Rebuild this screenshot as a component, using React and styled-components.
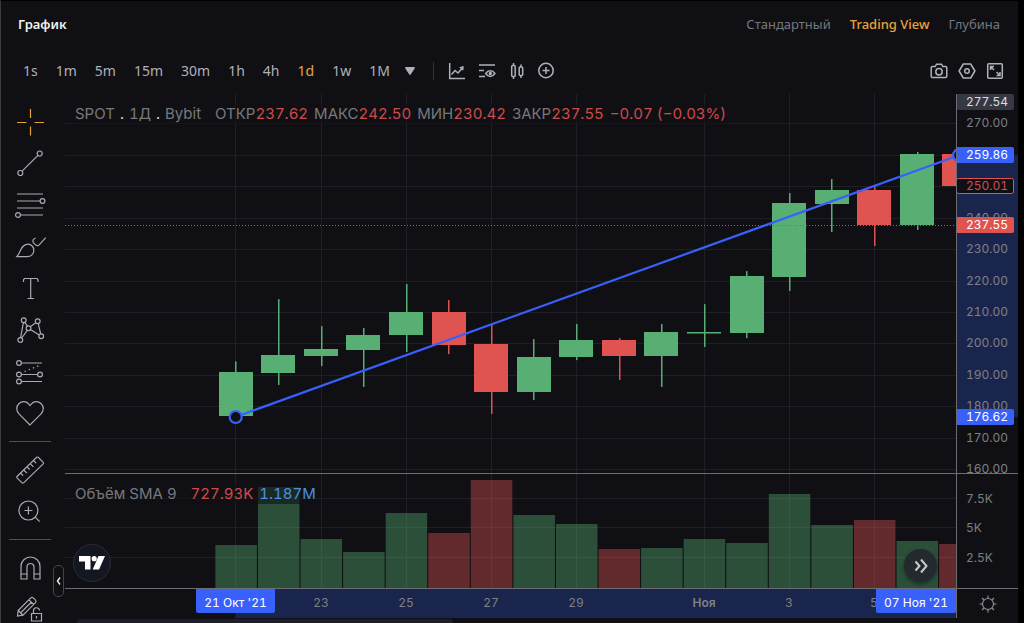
import React, { useState } from 'react'
import styled, { createGlobalStyle, css } from 'styled-components'

const UP = '#57af73'
const DOWN = '#df5350'
const BLUE = '#3861fb'
const NAVY = '#1a254d'
const PANEL = '#101014'
const GRID = '#1f2025'
const BORDER = '#6c6d72'
const ORANGE = '#e8a338'

const PRICE_HEIGHT = 379
const VOLUME_HEIGHT = 114
const TIME_HEIGHT = 29
const STEP = 42.57

// open, close, high, low, volume (K)
const candles = [
  [176.8, 190.9, 194.3, 176.8, 3.56],
  [190.6, 196.3, 214.1, 186.8, 8.47],
  [196.1, 198.1, 205.5, 192.8, 4.11],
  [197.9, 202.8, 204.9, 186.2, 2.97],
  [202.7, 210.0, 218.9, 197.3, 6.31],
  [210.0, 199.5, 213.8, 196.6, 4.58],
  [199.8, 184.6, 205.9, 177.6, 9.07],
  [184.6, 195.7, 201.4, 182.0, 6.14],
  [195.7, 201.1, 206.2, 194.7, 5.38],
  [201.1, 196.0, 201.7, 188.4, 3.22],
  [196.0, 203.6, 206.2, 186.2, 3.31],
  [203.4, 203.7, 212.5, 198.9, 4.11],
  [203.3, 221.4, 223.0, 201.7, 3.77],
  [221.1, 244.7, 247.8, 216.7, 7.84],
  [244.3, 248.8, 252.3, 235.4, 5.25],
  [248.8, 237.55, 250.4, 231.0, 5.72],
  [237.55, 260.2, 260.9, 236.1, 3.94],
  [260.2, 250.01, 260.2, 250.01, 3.64],
]

const priceTicks = [270, 260, 250, 240, 230, 220, 210, 200, 190, 180, 170, 160]
const volumeTicks = [7.5, 5, 2.5]
const timeTicks = [
  { index: 0 },
  { index: 2, label: '23' },
  { index: 4, label: '25' },
  { index: 6, label: '27' },
  { index: 8, label: '29' },
  { index: 11, label: 'Ноя', bold: true },
  { index: 13, label: '3' },
  { index: 15, label: '5' },
]

// x is counted from the right edge of the pane, so the last candle stays there
const xOf = (index) => index * STEP - 720.6
const priceY = (price) => 29.3 + (270 - price) * 3.145
const volumeY = (volume) => VOLUME_HEIGHT - 1 - volume * 11.8

const GlobalStyle = createGlobalStyle`
  * {
    box-sizing: border-box;
  }
  body {
    margin: 0;
    background: #000;
  }
`

const Panel = styled.main`
  display: flex;
  flex-direction: column;
  height: 100vh;
  margin-right: 6px;
  overflow: hidden;
  background: ${PANEL};
  border-top: 1px solid #000;
  border-left: 1px solid #3a3b3f;
  font-family: 'Noto Sans', sans-serif;
  font-size: 14px;
  color: #adb1b8;
`

const Header = styled.header`
  display: flex;
  align-items: center;
  justify-content: space-between;
  flex: none;
  height: 46px;
  padding: 0 18px 0 17px;
`

const Title = styled.h1`
  margin: 0;
  font-size: 13px;
  font-weight: 600;
  color: #f0f1f2;
`

const Tabs = styled.nav`
  display: flex;
  gap: 19px;
`

const PlainButton = styled.button`
  display: flex;
  align-items: center;
  justify-content: center;
  padding: 0;
  border: 0;
  background: none;
  font: inherit;
  color: inherit;
  cursor: pointer;
`

const Tab = styled(PlainButton)`
  font-size: 13px;
  color: ${(props) => (props.$active ? ORANGE : '#74777d')};
  font-weight: ${(props) => (props.$active ? 500 : 400)};
`

const Toolbar = styled.div`
  display: flex;
  align-items: center;
  justify-content: space-between;
  flex: none;
  height: 47px;
  padding: 0 14px 0 22px;
`

const ToolbarGroup = styled.div`
  display: flex;
  align-items: center;
  gap: ${(props) => props.$gap || 0}px;
`

const Interval = styled(PlainButton)`
  color: ${(props) => (props.$active ? ORANGE : 'inherit')};
`

const CaretButton = styled(PlainButton)`
  margin-left: 15px;
`

const Separator = styled.div`
  width: 1px;
  height: 18px;
  margin: 0 14px 0 18px;
  background: #303136;
`

const Body = styled.div`
  display: flex;
  flex: 1;
  min-height: 0;
`

const Sidebar = styled.aside`
  position: relative;
  flex: none;
  width: 64px;
  padding: 7px 14px 0 8px;
`

const ToolGroup = styled.div`
  display: flex;
  flex-direction: column;
  height: ${(props) => props.$height}px;
`

const Tool = styled(PlainButton)`
  flex: 1;
  color: ${(props) => (props.$active ? ORANGE : '#a9abb0')};
`

const ToolDivider = styled.hr`
  height: 1px;
  margin: 7px 0;
  border: 0;
  background: #4c4d55;
`

const Collapse = styled(PlainButton)`
  position: absolute;
  top: 471px;
  right: 1px;
  width: 11px;
  height: 32px;
  border: 1px solid #45464d;
  border-radius: 5px;
  background: ${PANEL};
  color: #e4e5e8;
`

const Chart = styled.section`
  display: grid;
  grid-template-columns: minmax(0, 1fr) 62px;
  grid-template-rows: ${PRICE_HEIGHT + 1}px ${VOLUME_HEIGHT + 1}px ${TIME_HEIGHT}px 1fr;
  flex: 1;
  min-width: 0;
  font-family: Inter, sans-serif;
  font-variant-numeric: tabular-nums;
`

const Pane = styled.div`
  position: relative;
  border-bottom: 1px solid ${BORDER};
`

const Scale = styled.div`
  border-left: 1px solid ${BORDER};
  ${(props) =>
    !props.$last &&
    css`
      border-bottom: 1px solid ${BORDER};
    `}
`

const Canvas = styled.svg`
  display: block;
  width: 100%;
  overflow: ${(props) => (props.$bleed ? 'visible' : 'hidden')};
`

const AxisText = styled.text`
  font-size: 12px;
  font-weight: ${(props) => (props.$bold ? 600 : 400)};
  fill: ${(props) => props.$color || '#7f8084'};
`

const Legend = styled.div`
  position: absolute;
  top: 10px;
  left: 8px;
  display: flex;
  gap: 14px;
  padding: 0 2px;
  background: rgba(16, 16, 20, 0.6);
  font-size: 15px;
  line-height: 20px;
  color: #77787c;
  white-space: nowrap;
`

const Quote = styled.span`
  display: flex;
  gap: ${(props) => props.$gap || 0}px;
`

const Value = styled.span`
  color: ${(props) => props.$color || '#cf4a4a'};
`

const Dot = styled.span`
  color: #d0d1d4;
`

const LogoLink = styled.a`
  position: absolute;
  left: 8px;
  bottom: 6px;
  display: flex;
  align-items: center;
  justify-content: center;
  width: 38px;
  height: 38px;
  border: 1px solid #2a2c36;
  border-radius: 50%;
  background: #131722;
  color: #fff;
`

const ScrollEnd = styled(PlainButton)`
  position: absolute;
  right: 19px;
  bottom: 6px;
  width: 33px;
  height: 33px;
  border-radius: 50%;
  background: #24292d;
  box-shadow: 0 2px 4px rgba(0, 0, 0, 0.4);
  color: #c8cacd;
`

const Corner = styled(Scale)`
  display: flex;
  align-items: center;
  justify-content: center;
  color: #8b8c91;
`

const ScrollTrack = styled.div`
  grid-column: 1 / -1;
  padding: 1px 0 0 12px;
`

const ScrollThumb = styled.div`
  width: 40%;
  height: 8px;
  border-radius: 8px;
  background: #1d1e27;
`

const IconSvg = styled.svg`
  overflow: visible;
`

const Icon = ({ size = 28, stroke = 1.2, children }) => (
  <IconSvg
    width={size}
    height={size}
    viewBox={`0 0 ${size} ${size}`}
    fill="none"
    stroke="currentColor"
    strokeWidth={stroke}
    aria-hidden="true"
  >
    {children}
  </IconSvg>
)

const tools = [
  {
    name: 'Перекрестие',
    icon: <path d="M14.5 1v9M14.5 18.5v9M1 14.5h9.5M18.5 14.5H28" />,
  },
  {
    name: 'Линия тренда',
    icon: (
      <>
        <circle cx="23.7" cy="4.5" r="2.5" />
        <circle cx="4.3" cy="24" r="2.5" />
        <path d="M6.1 22.2 21.9 6.3" />
      </>
    ),
  },
  {
    name: 'Уровни Фибоначчи',
    icon: (
      <>
        <path d="M1 3h26M1 10h23.5M1 17h26M4.5 24H27" />
        <circle cx="26.5" cy="10" r="2.4" />
        <circle cx="2" cy="24" r="2.4" />
      </>
    ),
  },
  {
    name: 'Кисть',
    icon: (
      <>
        <path d="M.8 23.6C4.5 20 5 11.2 11.8 11.2c3.600 0 6 2.700 6 6 0 3.800-2.800 6.400-6.500 6.400z" />
        <path d="M19.6 5c-2.600.8-3.400 2.800-2.200 4.600l2.200 2.200c1.200 1.200 2.400 1.200 3.600.1l6.500-7.300" />
      </>
    ),
  },
  {
    name: 'Текст',
    icon: <path d="M7.500 8V5.800L8.500 4.500h12.500l1 1.300V8M14.700 4.500v20M11.500 24.500h6.500" />,
  },
  {
    name: 'Паттерн',
    icon: (
      <>
        <circle cx="7.7" cy="4.2" r="2.4" />
        <circle cx="21.7" cy="5.3" r="2.4" />
        <circle cx="12.5" cy="12.2" r="2.4" />
        <circle cx="25.2" cy="20.3" r="2.4" />
        <circle cx="4.3" cy="24" r="2.4" />
        <path d="M7.4 6.6 4.6 21.6M8.7 6.4l2.8 3.7M14.3 10.7 19.8 6.8M22.2 7.7l2.5 10.2M14.5 13.5l8.7 5.5M11.3 14.3 5.7 22" />
      </>
    ),
  },
  {
    name: 'Прогноз',
    icon: (
      <>
        <circle cx="3" cy="5" r="2.4" />
        <circle cx="3" cy="16.5" r="2.4" />
        <circle cx="24" cy="16.5" r="2.4" />
        <circle cx="3" cy="23.5" r="2.4" />
        <path d="M5.4 5H26M5.4 16.5h16.2M5.4 23.5H26" />
        <path d="M8.5 13.5 25 6.8" strokeDasharray="1.5 3" />
      </>
    ),
  },
  {
    name: 'Избранное',
    icon: (
      <path d="M14 26 3.2 15.2c-3.200-3.300-3.200-7.800-.4-10.500C5.800 1.800 10.500 2 13 5.400l1 1.200 1-1.200c2.500-3.400 7.200-3.600 10.200-.7 2.800 2.700 2.800 7.200-.4 10.500z" />
    ),
  },
]

const viewTools = [
  {
    name: 'Линейка',
    icon: (
      <>
        <path d="M1 20.500 20.700 1.300c.5-.4 1-.4 1.500 0l5 5c.5.5.5 1 0 1.500L7.600 26.900c-.5.4-1 .4-1.500 0l-5.100-5c-.4-.5-.4-1 0-1.400z" />
        <path d="m4.500 17 2.700 2.700M7.700 14l3.200 3.200M11 10.800l2.700 2.700M14.200 7.700l3.200 3.200M17.500 4.500l2.700 2.700" />
      </>
    ),
  },
  {
    name: 'Увеличить',
    icon: (
      <>
        <circle cx="12.4" cy="13.5" r="9.5" />
        <path d="m19.200 20.200 4.500 4.500M12.400 9.500v8M8.400 13.500h8" />
      </>
    ),
  },
]

const modeTools = [
  {
    name: 'Магнит',
    icon: (
      <path d="M5 25V12.500a9.500 9.500 0 0 1 19 0V25h-6V13a3.500 3.500 0 0 0-7 0v12zM5 20h6M18 20h6" />
    ),
  },
  {
    name: 'Режим рисования',
    icon: (
      <>
        <path d="M2.200 15.500 14.800 2.900c.8-.8 1.700-.8 2.500 0l2.200 2.200c.8.8.8 1.700 0 2.500L7 20.200l-5.500.8zM13 4.800l4.700 4.700M4.500 18 15.500 7M2.200 15.500 7 20.200" />
        <path d="M15.500 18.500h10V26h-10zM17.500 18.500V16a3 3 0 0 1 6-.5M20.500 21v2.500" />
      </>
    ),
  },
]

const intervals = ['1s', '1m', '5m', '15m', '30m', '1h', '4h', '1d', '1w', '1M']
const tabs = ['Стандартный', 'Trading View', 'Глубина']

const GridColumns = ({ height }) =>
  timeTicks.map((tick) => (
    <rect
      key={tick.index}
      x={Math.round(xOf(tick.index))}
      width="1"
      height={height}
      fill={GRID}
    />
  ))

const PricePane = () => (
  <Canvas height={PRICE_HEIGHT} role="img" aria-label="График цены">
    {priceTicks.map((price) => (
      <rect
        key={price}
        y={Math.round(priceY(price))}
        width="100%"
        height="1"
        fill={GRID}
      />
    ))}
    <svg x="100%" overflow="visible">
      <GridColumns height={PRICE_HEIGHT} />
      {candles.map(([open, close, high, low], i) => {
        const color = close >= open ? UP : DOWN
        const top = Math.round(priceY(Math.max(open, close)))
        const bottom = Math.round(priceY(Math.min(open, close)))
        return (
          <g key={i} fill={color}>
            <rect
              x={Math.round(xOf(i))}
              y={priceY(high)}
              width="1.5"
              height={priceY(low) - priceY(high)}
            />
            <rect
              x={Math.round(xOf(i) - 16.7)}
              y={top}
              width="34"
              height={Math.max(bottom - top, 1.5)}
            />
          </g>
        )
      })}
    </svg>
    <line
      x1="0"
      x2="100%"
      y1="131.5"
      y2="131.5"
      stroke="#d04c4b"
      strokeDasharray="1 2"
      shapeRendering="crispEdges"
    />
    <svg x="100%" overflow="visible">
      <g stroke={BLUE} strokeWidth="2.2" fill={PANEL}>
        <line
          x1={xOf(0)}
          y1={priceY(176.62)}
          x2={xOf(17)}
          y2={priceY(259.86)}
        />
        <circle cx={xOf(0) + 0.3} cy={priceY(176.62)} r="6" />
        <circle cx={xOf(17)} cy={priceY(259.86)} r="6" />
      </g>
    </svg>
  </Canvas>
)

const VolumePane = () => (
  <Canvas height={VOLUME_HEIGHT} role="img" aria-label="Объём">
    {volumeTicks.map((tick) => (
      <rect
        key={tick}
        y={Math.round(volumeY(tick)) - 1}
        width="100%"
        height="1"
        fill={GRID}
      />
    ))}
    <svg x="100%" overflow="visible">
      <GridColumns height={VOLUME_HEIGHT} />
      {candles.map(([open, close, , , volume], i) => {
        const top = Math.round(volumeY(volume))
        return (
          <rect
            key={i}
            x={xOf(i) - 20}
            y={top}
            width="41.5"
            height={VOLUME_HEIGHT - top}
            fill={close >= open ? UP : DOWN}
            fillOpacity="0.4"
          />
        )
      })}
    </svg>
  </Canvas>
)

const PriceTag = ({ price, y, fill, stroke, color = '#fff' }) => (
  <g>
    <rect
      x={stroke ? -0.5 : -1}
      y={Math.round(y) - (stroke ? 7.5 : 8)}
      width={stroke ? 57 : 58}
      height={stroke ? 15 : 16}
      rx="2"
      fill={fill}
      stroke={stroke}
    />
    <AxisText x="9" y={Math.round(y) + 4} $color={color}>
      {price.toFixed(2)}
    </AxisText>
  </g>
)

const PriceScale = () => (
  <Canvas height={PRICE_HEIGHT}>
    <rect
      y={priceY(259.86)}
      width="100%"
      height={priceY(176.62) - priceY(259.86)}
      fill={NAVY}
    />
    {priceTicks
      .filter((price) => price !== 260 && price !== 250)
      .map((price) => (
        <AxisText key={price} x="9" y={Math.round(priceY(price)) + 4}>
          {price.toFixed(2)}
        </AxisText>
      ))}
    <PriceTag price={277.54} y={8} fill="#363944" color="#dcdde0" />
    <PriceTag
      price={250.01}
      y={priceY(250.01)}
      fill={PANEL}
      stroke={DOWN}
      color="#d04c4b"
    />
    <PriceTag price={237.55} y={priceY(237.55)} fill={DOWN} />
    <PriceTag price={259.86} y={priceY(259.86)} fill={BLUE} />
    <PriceTag price={176.62} y={priceY(176.62)} fill={BLUE} />
  </Canvas>
)

const TimeTag = ({ x, width, children }) => (
  <g>
    <rect x={x} y="-1" width={width} height="25" rx="2" fill={BLUE} />
    <AxisText x={x + width / 2} y="18" textAnchor="middle" $color="#fff">
      {children}
    </AxisText>
  </g>
)

const TimeScale = () => (
  <Canvas height={TIME_HEIGHT} $bleed>
    <svg x="100%" overflow="visible">
      <rect x={xOf(0)} width={-xOf(0)} height={TIME_HEIGHT} fill={NAVY} />
      {timeTicks.map((tick) => (
        <AxisText
          key={tick.index}
          x={Math.round(xOf(tick.index))}
          y="18"
          textAnchor="middle"
          $bold={tick.bold}
        >
          {tick.label}
        </AxisText>
      ))}
      <TimeTag x={-760} width={79}>
        21 Окт '21
      </TimeTag>
      <TimeTag x={-80} width={80}>
        07 Ноя '21
      </TimeTag>
    </svg>
  </Canvas>
)

const ToolButtons = ({ items, height, active, onSelect }) => (
  <ToolGroup $height={height}>
    {items.map((tool) => (
      <Tool
        key={tool.name}
        type="button"
        aria-label={tool.name}
        $active={active === tool.name}
        onClick={() => onSelect(tool.name)}
      >
        <Icon>{tool.icon}</Icon>
      </Tool>
    ))}
  </ToolGroup>
)

const App = () => {
  const [tab, setTab] = useState('Trading View')
  const [interval, setInterval] = useState('1d')
  const [tool, setTool] = useState('Перекрестие')

  return (
    <>
      <GlobalStyle />
      <Panel>
        <Header>
          <Title>График</Title>
          <Tabs>
            {tabs.map((name) => (
              <Tab
                key={name}
                type="button"
                $active={tab === name}
                onClick={() => setTab(name)}
              >
                {name}
              </Tab>
            ))}
          </Tabs>
        </Header>

        <Toolbar>
          <ToolbarGroup>
            <ToolbarGroup $gap={18}>
              {intervals.map((name) => (
                <Interval
                  key={name}
                  type="button"
                  $active={interval === name}
                  onClick={() => setInterval(name)}
                >
                  {name}
                </Interval>
              ))}
            </ToolbarGroup>
            <CaretButton type="button" aria-label="Другие интервалы">
              <svg width="10" height="8" viewBox="0 0 10 8" fill="currentColor">
                <path d="M1 0h8c.8 0 1.200.8.7 1.500L5.700 7.500c-.4.500-1 .5-1.400 0L.3 1.500C-.2.8.2 0 1 0z" />
              </svg>
            </CaretButton>
            <Separator />
            <ToolbarGroup $gap={12}>
              <PlainButton type="button" aria-label="Тип графика">
                <Icon size={18} stroke={1.5}>
                  <path d="M1.700 1v15.500H17M3.500 12.500l3.500-4 3 2.500 4-4.500" />
                  <path d="m11.200 5.200 4.600-1.200-.6 4.800z" fill="currentColor" stroke="none" />
                </Icon>
              </PlainButton>
              <PlainButton type="button" aria-label="Индикаторы">
                <Icon size={18} stroke={1.5}>
                  <path d="M1 3h16M1 8.500h5M1 14.500h6" />
                  <path d="M7.700 11.500C9 9.500 10.600 8.700 12.300 8.700s3.300.8 4.600 2.800c-1.300 2-2.900 2.900-4.600 2.900s-3.300-.9-4.600-2.900z" />
                  <circle cx="12.3" cy="11.5" r="1" fill="currentColor" />
                </Icon>
              </PlainButton>
              <PlainButton type="button" aria-label="Свечи">
                <Icon size={18} stroke={1.5}>
                  <rect x="3.7" y="3.5" width="3.5" height="11" rx="1" />
                  <rect x="11.2" y="5" width="3.5" height="8.5" rx="1" />
                  <path d="M5.500 1v2.500M5.500 14.500V17M13 2.500V5M13 13.500V16" />
                </Icon>
              </PlainButton>
              <PlainButton type="button" aria-label="Добавить">
                <Icon size={18} stroke={1.5}>
                  <circle cx="8" cy="8.5" r="7.2" />
                  <path d="M8 5v7M4.500 8.500h7" />
                </Icon>
              </PlainButton>
            </ToolbarGroup>
          </ToolbarGroup>
          <ToolbarGroup $gap={10}>
            <PlainButton type="button" aria-label="Снимок графика">
              <Icon size={18} stroke={1.5}>
                <path d="M2.500 4.500h2.700L6.500 2.200h5l1.300 2.300h2.700c.8 0 1.300.5 1.300 1.300v8.500c0 .8-.5 1.300-1.300 1.300h-13c-.8 0-1.300-.5-1.300-1.300V5.800c0-.8.5-1.300 1.300-1.300z" />
                <circle cx="9" cy="9.7" r="3.2" />
              </Icon>
            </PlainButton>
            <PlainButton type="button" aria-label="Настройки">
              <Icon size={18} stroke={1.5}>
                <path d="M5.300 2h7.400L16.900 9l-4.200 7H5.300L1.100 9z" strokeLinejoin="round" />
                <circle cx="9" cy="9" r="2.3" />
              </Icon>
            </PlainButton>
            <PlainButton type="button" aria-label="На весь экран">
              <Icon size={18} stroke={1.5}>
                <rect x="1.7" y="1.7" width="14.6" height="14.6" rx="1" />
                <path d="M4.500 8V4.500H8M4.500 4.500 8 8M14 10v3.500h-3.500M14 13.500 10.500 10" />
              </Icon>
            </PlainButton>
          </ToolbarGroup>
        </Toolbar>

        <Body>
          <Sidebar>
            <ToolButtons
              items={tools}
              height={333}
              active={tool}
              onSelect={setTool}
            />
            <ToolDivider />
            <ToolButtons
              items={viewTools}
              height={83}
              active={tool}
              onSelect={setTool}
            />
            <ToolDivider />
            <ToolButtons
              items={modeTools}
              height={83}
              active={tool}
              onSelect={setTool}
            />
            <Collapse type="button" aria-label="Скрыть панель">
              <svg
                width="5"
                height="8"
                viewBox="0 0 5 8"
                fill="none"
                stroke="currentColor"
                strokeWidth="1.5"
              >
                <path d="M4 .5 1.500 4 4 7.500" />
              </svg>
            </Collapse>
          </Sidebar>

          <Chart>
            <Pane>
              <PricePane />
              <Legend>
                <Quote $gap={5}>
                  SPOT<Dot>.</Dot>1Д<Dot>.</Dot>Bybit
                </Quote>
                <ToolbarGroup $gap={6}>
                  <Quote>
                    ОТКР<Value>237.62</Value>
                  </Quote>
                  <Quote>
                    МАКС<Value>242.50</Value>
                  </Quote>
                  <Quote>
                    МИН<Value>230.42</Value>
                  </Quote>
                  <Quote>
                    ЗАКР<Value>237.55</Value>
                  </Quote>
                  <Value>−0.07 (−0.03%)</Value>
                </ToolbarGroup>
              </Legend>
            </Pane>
            <Scale>
              <PriceScale />
            </Scale>

            <Pane>
              <VolumePane />
              <Legend>
                Объём SMA 9
                <Quote $gap={6}>
                  <Value>727.93K</Value>
                  <Value $color="#4a90e2">1.187M</Value>
                </Quote>
              </Legend>
              <LogoLink
                href="https://www.tradingview.com/"
                aria-label="TradingView"
              >
                <svg width="26" height="14" viewBox="0 0 26 14" fill="currentColor">
                  <path d="M0 0h11.500v13.500H6V5.500H0z" />
                  <circle cx="15.2" cy="2.7" r="2.6" />
                  <path d="M19.500 0H26l-6 13.500h-6.300z" />
                </svg>
              </LogoLink>
              <ScrollEnd type="button" aria-label="К последней свече">
                <svg
                  width="14"
                  height="16"
                  viewBox="0 0 14 16"
                  fill="none"
                  stroke="currentColor"
                  strokeWidth="2"
                >
                  <path d="m1.500 3.500 4 4.500-4 4.500M7 1.500 12.500 8 7 14.500" />
                </svg>
              </ScrollEnd>
            </Pane>
            <Scale>
              <Canvas height={VOLUME_HEIGHT}>
                {volumeTicks.map((tick) => (
                  <AxisText key={tick} x="9" y={Math.round(volumeY(tick)) + 4}>
                    {tick}K
                  </AxisText>
                ))}
              </Canvas>
            </Scale>

            <TimeScale />
            <Corner $last>
              <PlainButton type="button" aria-label="Параметры шкалы">
                <Icon size={18}>
                  <circle cx="9" cy="9" r="5.5" />
                  <path d="M9 .5v3M9 14.500v3M.5 9h3M14.500 9h3M3 3l2 2M13 13l2 2M15 3l-2 2M5 13l-2 2" />
                </Icon>
              </PlainButton>
            </Corner>
            <ScrollTrack>
              <ScrollThumb />
            </ScrollTrack>
          </Chart>
        </Body>
      </Panel>
    </>
  )
}

export default App
